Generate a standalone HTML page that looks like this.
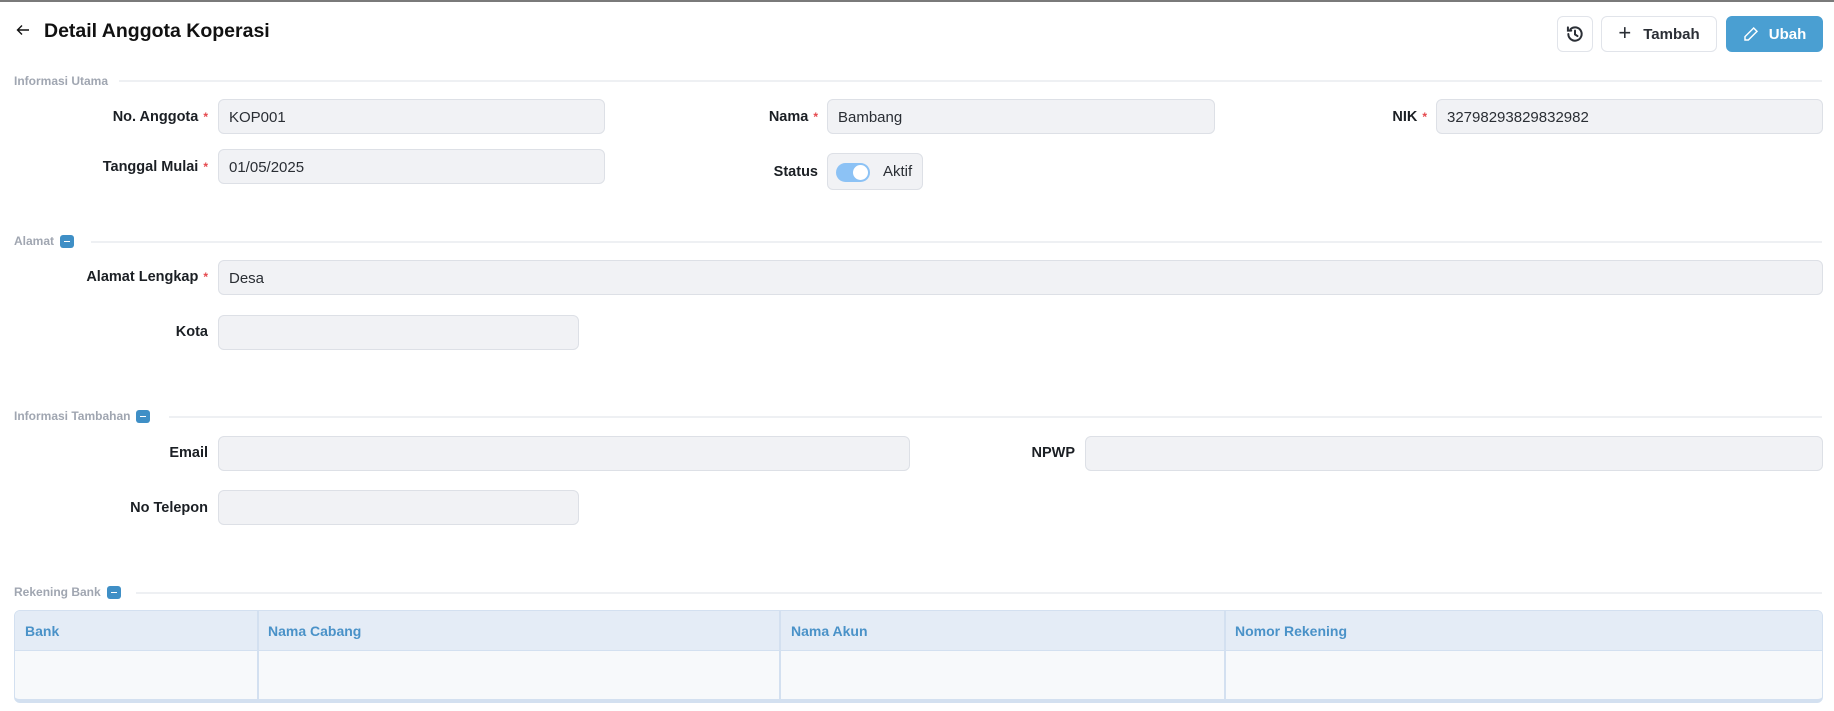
<!DOCTYPE html>
<html><head><meta charset="utf-8"><style>
*{box-sizing:border-box;margin:0;padding:0}
body{width:1834px;height:711px;background:#fff;font-family:"Liberation Sans",sans-serif;position:relative;overflow:hidden;color:#1f2328}
.a{position:absolute}
.topline{left:0;top:0;width:1834px;height:2px;background:#7a7a7a}
.title{left:44px;top:20px;font-size:19.5px;font-weight:bold;color:#111}
.btn{position:absolute;top:16px;height:36px;border:1.5px solid #e1e4ea;border-radius:6px;background:#fff;display:flex;align-items:center;justify-content:center;font-weight:bold;font-size:15px;color:#2b2f36}
.sec{position:absolute;left:14px;font-size:12px;color:#a0a6b1;font-weight:bold;display:flex;align-items:center}
.sec .m{display:inline-block;width:14px;height:13px;background:#3f8fc6;border-radius:3px;margin-left:6px;position:relative}
.sec .m:after{content:"";position:absolute;left:4px;top:6px;width:6px;height:1.5px;background:#fff}
.hl{position:absolute;height:2px;background:#eef0f3;right:12px}
.lbl{position:absolute;font-size:14.5px;font-weight:bold;color:#1b1f24;text-align:right;height:20px;line-height:20px}
.lbl i{color:#e5484d;font-style:normal;margin-left:5px;font-size:12px;vertical-align:top}
.in{position:absolute;height:35px;background:#f1f2f5;border:1.5px solid #dde0e6;border-radius:6px;font-size:15px;line-height:35px;padding-left:10px;color:#2a2e34}
</style></head><body>
<div class="a topline"></div>
<svg class="a" style="left:15px;top:22px" width="16" height="16" viewBox="0 0 16 16"><path d="M14 8H3M7 3.5L2.5 8 7 12.5" stroke="#111" stroke-width="1.4" fill="none"/></svg>
<div class="a title">Detail Anggota Koperasi</div>

<div class="btn" style="left:1557px;width:36px"><svg width="20" height="20" viewBox="0 0 24 24" fill="none" stroke="#2b2f36" stroke-width="2.4" stroke-linecap="round"><path d="M4 12a8 8 0 1 0 2.5-5.8"/><path d="M3.5 4v4h4"/><path d="M12 8v4.5l3 2"/></svg></div>
<div class="btn" style="left:1601px;width:116px"><span style="font-size:22px;font-weight:normal;margin-right:12px;margin-top:-2px">+</span>Tambah</div>
<div class="btn" style="left:1726px;width:97px;background:#4a9fd2;border-color:#4a9fd2;color:#fff"><svg width="16" height="16" viewBox="0 0 24 24" fill="none" stroke="#fff" stroke-width="2.2" style="margin-right:10px"><path d="M16 3l5 5L8 21H3v-5z"/></svg>Ubah</div>

<div class="sec" style="top:74px">Informasi Utama</div><div class="hl" style="left:119px;top:80px"></div>
<div class="lbl" style="right:1626px;top:107px">No. Anggota<i>*</i></div><div class="in" style="left:218px;top:99px;width:387px">KOP001</div>
<div class="lbl" style="right:1016px;top:107px">Nama<i>*</i></div><div class="in" style="left:827px;top:99px;width:388px">Bambang</div>
<div class="lbl" style="right:407px;top:107px">NIK<i>*</i></div><div class="in" style="left:1436px;top:99px;width:387px">32798293829832982</div>
<div class="lbl" style="right:1626px;top:157px">Tanggal Mulai<i>*</i></div><div class="in" style="left:218px;top:149px;width:387px">01/05/2025</div>
<div class="lbl" style="right:1016px;top:162px">Status</div>
<div class="in" style="left:827px;top:153px;width:96px;height:37px;padding-left:8px"><span style="position:absolute;left:8px;top:9px;width:34px;height:19px;border-radius:10px;background:#8cc2f5"></span><span style="position:absolute;left:25px;top:11px;width:15px;height:15px;border-radius:50%;background:#fff"></span><span style="position:absolute;left:55px;top:0">Aktif</span></div>

<div class="sec" style="top:234px">Alamat<span class="m"></span></div><div class="hl" style="left:91px;top:241px"></div>
<div class="lbl" style="right:1626px;top:267px">Alamat Lengkap<i>*</i></div><div class="in" style="left:218px;top:260px;width:1605px">Desa</div>
<div class="lbl" style="right:1626px;top:322px">Kota</div><div class="in" style="left:218px;top:315px;width:361px"></div>

<div class="sec" style="top:409px">Informasi Tambahan<span class="m"></span></div><div class="hl" style="left:169px;top:416px"></div>
<div class="lbl" style="right:1626px;top:443px">Email</div><div class="in" style="left:218px;top:436px;width:692px"></div>
<div class="lbl" style="right:759px;top:443px">NPWP</div><div class="in" style="left:1085px;top:436px;width:738px"></div>
<div class="lbl" style="right:1626px;top:498px">No Telepon</div><div class="in" style="left:218px;top:490px;width:361px"></div>

<div class="sec" style="top:585px">Rekening Bank<span class="m"></span></div><div class="hl" style="left:136px;top:592px"></div>
<div class="a" style="left:14px;top:610px;width:1809px;height:93px;border:1.5px solid #d3e0f0;border-bottom:4px solid #d3e0f0;border-radius:6px;overflow:hidden;background:#f7f9fb">
 <div style="height:40px;background:#e4ecf6;border-bottom:1.5px solid #d3e0f0;position:relative;font-size:14px;font-weight:bold;color:#4a92c8;line-height:40px">
  <span class="a" style="left:10px">Bank</span><span class="a" style="left:253px">Nama Cabang</span><span class="a" style="left:776px">Nama Akun</span><span class="a" style="left:1220px">Nomor Rekening</span>
 </div>
 <div class="a" style="left:242px;top:0;width:1.5px;height:100%;background:#d3e0f0"></div>
 <div class="a" style="left:764px;top:0;width:1.5px;height:100%;background:#d3e0f0"></div>
 <div class="a" style="left:1209px;top:0;width:1.5px;height:100%;background:#d3e0f0"></div>
</div>
</body></html>
